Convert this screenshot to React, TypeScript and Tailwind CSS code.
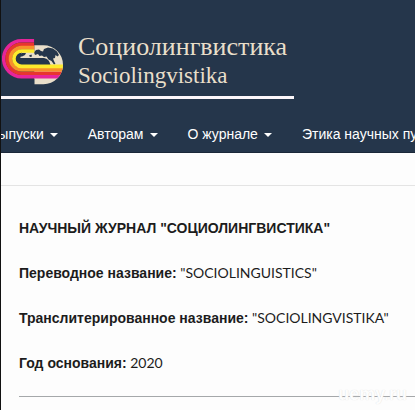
interface MenuItem {
    label: string
    hasMenu: boolean
}

const MENU: MenuItem[] = [
    { label: 'Выпуски', hasMenu: true },
    { label: 'Авторам', hasMenu: true },
    { label: 'О журнале', hasMenu: true },
    { label: 'Этика научных публикаций', hasMenu: false },
]

const FACTS = [
    { label: 'Переводное название:', value: '"SOCIOLINGUISTICS"' },
    { label: 'Транслитерированное название:', value: '"SOCIOLINGVISTIKA"' },
    { label: 'Год основания:', value: '2020' },
]

// outermost band first
const BANDS = [
    { color: '#e6259a', radius: 17.9 },
    { color: '#e8352f', radius: 14.5 },
    { color: '#f7912b', radius: 11.1 },
    { color: '#fdea2c', radius: 7.7 },
]

const CENTER_Y = 58.7

function Logo() {
    return (
        <svg viewBox="2 39 61 46" className="mt-[7px] h-[46px] w-[61px] shrink-0" aria-hidden="true">
            <defs>
                <clipPath id="logo-shape">
                    <path d="M0 38 H34.300 V45.300 H43.500 A19.500 19.500 0 0 1 43.500 84.300 H34.300 V79 H0 Z" />
                </clipPath>
            </defs>
            <g clipPath="url(#logo-shape)">
                <path d="M34.300 45 H64 V85 H34.300 Z" fill="#e9dfca" />
                <path d="M22 52 H36 V59 H20 Z" fill="#e9dfca" />
                <path
                    d="M34 52.500 l2 -2.500 3 -.5 2 1.500 2 .5 1 -2.500 4 -1.500 5 1 4 3 2 3.500 -1.500 1.500 -2 -1.500 -.5 3 -2 .5 1 2.500 1.500 3 -1.500 .5 -2.500 -3.500 -3 -1.500 -2 -3 -2.500 .5 -2 -1.500 -2.500 .5 -1.500 -2 -3 1 z"
                    fill="#25364b"
                />
                <path d="M22 53 l4 0 -1 2 -3 1.500 -3 0 z M29 55.500 l2.500 -1 .5 2 -2 .5 z" fill="#25364b" />
                <path d="M20 58 H44 Q49 58.500 50.500 65 H20 A3.500 3.500 0 0 1 20 58 Z" fill="#25364b" />
                {BANDS.map((band) => (
                    <path
                        key={band.color}
                        d={`M34.3 ${CENTER_Y - band.radius} H21.6 A${band.radius} ${band.radius} 0 0 0 21.6 ${CENTER_Y + band.radius} H64`}
                        fill="none"
                        stroke={band.color}
                        strokeWidth="3.6"
                    />
                ))}
            </g>
        </svg>
    )
}

function Caret() {
    return (
        <svg viewBox="0 0 8 4" className="mt-px h-1 w-2" aria-hidden="true">
            <path d="M0 0 H8 L4 4 Z" fill="currentColor" />
        </svg>
    )
}

export default function App() {
    return (
        <div className="min-h-screen overflow-hidden border-l border-[#111] bg-[#fdfdfd] font-['Liberation_Sans',sans-serif] text-sm text-[#1c1c1c]">
            <header className="border-b border-[#1b2839] bg-[#25364b]">
                <a href="#" className="flex w-[293px] items-start gap-[15px] border-b-3 border-[#fbf6fa] pt-8 pb-1.5 pl-px">
                    <Logo />
                    <span className="font-['Liberation_Serif',serif] whitespace-nowrap text-[#e9dfca]">
                        <span className="block text-[26px] leading-[29px]">Социолингвистика</span>
                        <span className="block text-[23px] leading-[29px]">Sociolingvistika</span>
                    </span>
                </a>
                <nav className="-ml-3 flex gap-[30px] pt-[25px] pb-[7px]">
                    {MENU.map((item) => (
                        <a key={item.label} href="#" className="flex shrink-0 items-center gap-1.5 leading-[21px] whitespace-nowrap text-white">
                            {item.label}
                            {item.hasMenu && <Caret />}
                        </a>
                    ))}
                </nav>
            </header>
            <main className="mt-8 border-t border-[#e4e4e4] py-8 pl-[18px]">
                <h1 className="leading-[21px] font-bold">НАУЧНЫЙ ЖУРНАЛ "СОЦИОЛИНГВИСТИКА"</h1>
                {FACTS.map((fact) => (
                    <p key={fact.label} className="mt-[23px] font-[Lato,sans-serif] leading-[21px]">
                        <b className="font-['Liberation_Sans',sans-serif]">{fact.label}</b> {fact.value}
                    </p>
                ))}
                <div className="relative mt-[22px]">
                    <hr className="border-[#a5a8aa]" />
                    <span className="absolute -top-3 right-2 text-lg leading-5 font-bold text-[#fdfdfd] [text-shadow:0_0_1px_#d8d8d8]">
                        uemy.ru
                    </span>
                </div>
            </main>
        </div>
    )
}
